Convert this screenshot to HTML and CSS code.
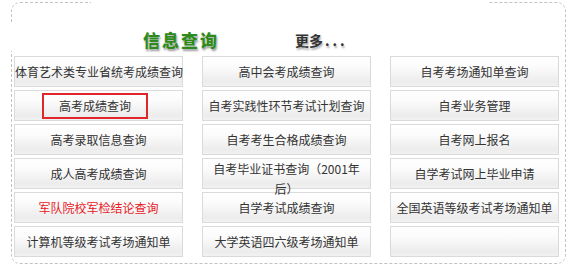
FILE: index.html
```html
<!DOCTYPE html>
<html lang="zh-CN">
<head>
<meta charset="UTF-8">
<title>信息查询</title>
<link rel="stylesheet" href="styles.css">
</head>
<body>
  <!-- 信息查询 box -->
  <div class="box">
    <div class="head">
      <span class="title">信息查询</span>
      <span class="more">更多<span class="dots">...</span></span>
    </div>
    <div class="links">
      <div class="cell">体育艺术类专业省统考成绩查询</div>
      <div class="cell">高中会考成绩查询</div>
      <div class="cell">自考考场通知单查询</div>

      <div class="cell mark"><span class="hl">高考成绩查询</span></div>
      <div class="cell">自考实践性环节考试计划查询</div>
      <div class="cell">自考业务管理</div>

      <div class="cell">高考录取信息查询</div>
      <div class="cell">自考考生合格成绩查询</div>
      <div class="cell">自考网上报名</div>

      <div class="cell">成人高考成绩查询</div>
      <div class="cell tall">自考毕业证书查询（2001年<br>后）</div>
      <div class="cell">自学考试网上毕业申请</div>

      <div class="cell red">军队院校军检结论查询</div>
      <div class="cell">自学考试成绩查询</div>
      <div class="cell">全国英语等级考试考场通知单</div>

      <div class="cell">计算机等级考试考场通知单</div>
      <div class="cell">大学英语四六级考场通知单</div>
      <div class="cell"></div>
    </div>
  </div>
</body>
</html>
```

FILE: styles.css
```css
/* page */
body
{
  margin: 0;
  background: #fff;
  font-family: "Noto Sans CJK SC", "Liberation Sans", sans-serif;
}
/* outer dashed frame */
.box
{
  position: relative;
  margin: 2px 0 0 11px;
  width: 555px;
  height: 262px;
  box-sizing: border-box;
  border: 1px dashed #c2c2c2;
  border-radius: 9px;
  padding: 0 6px 0 2px;
}
/* gaps in the frame */
.box::before
{
  content: "";
  position: absolute;
  top: -1px;
  left: 79px;
  width: 397px;
  height: 2px;
  background: #fff;
}
.box::after
{
  content: "";
  position: absolute;
  top: 20px;
  left: -1px;
  width: 2px;
  height: 28px;
  background: #fff;
}
/* heading row */
.head
{
  display: flex;
  align-items: center;
  height: 20px;
  padding: 26px 0 0 129px;
  margin-bottom: 7px;
}
.title
{
  font-size: 17px;
  font-weight: 900;
  letter-spacing: 2px;
  color: #2e8a1c;
  text-shadow: 0 0 1px #fff, 1px 2px 2px #9a9a9a;
}
.more
{
  margin-left: 76px;
  margin-top: 2px;
  font-size: 14px;
  font-weight: bold;
  color: #333;
  font-family: "Noto Sans CJK SC", "Liberation Serif", serif;
  text-shadow: 1px 2px 2px #aaa;
}
.dots
{
  letter-spacing: 3px;
  margin-left: 2px;
}
/* link grid */
.links
{
  display: grid;
  grid-template-columns: repeat(3, 169px);
  grid-auto-rows: 31px;
  column-gap: 19px;
  row-gap: 3px;
}
.cell
{
  box-sizing: border-box;
  border: 1px solid #dadada;
  background: linear-gradient(#fff 0%, #fbfbfb 35%, #ececec 85%, #f2f2f2 100%);
  padding-top: 3px;
  font-size: 12px;
  line-height: 24px;
  text-align: center;
  color: #333;
  white-space: nowrap;
}
/* wrapped text spills over next row */
.tall
{
  z-index: 1;
  padding-top: 0;
  line-height: 20px;
}
.red
{
  color: #e8191f;
}
/* highlighted entry */
.mark
{
  display: flex;
  align-items: center;
  justify-content: center;
  padding: 0;
}
.hl
{
  display: block;
  width: 106px;
  height: 26px;
  box-sizing: border-box;
  border: 2px solid #e0262b;
  line-height: 22px;
  margin-right: 7px;
}
```
